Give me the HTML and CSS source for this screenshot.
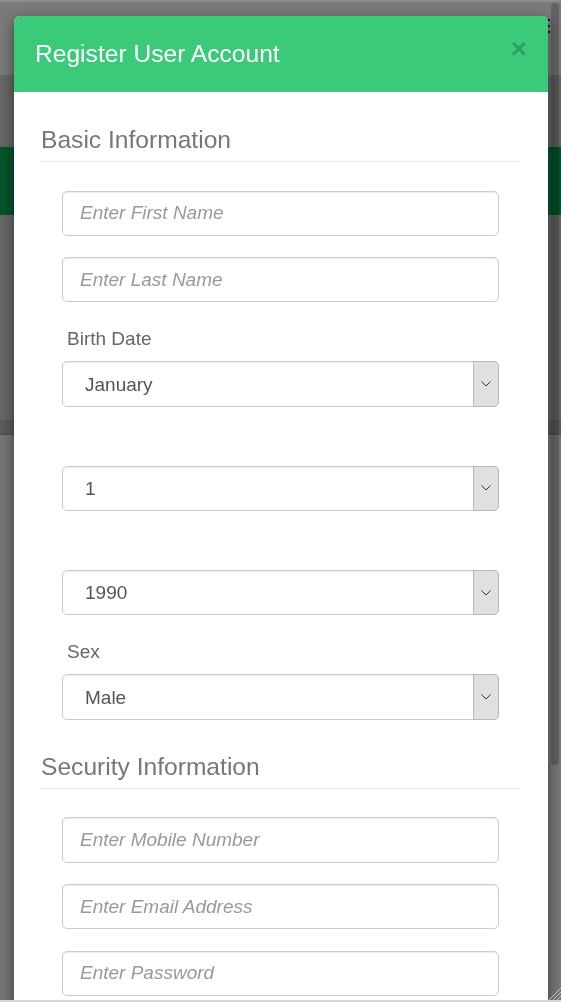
FILE: index.html
```html
<!DOCTYPE html>
<html lang="en">
<head>
<meta charset="utf-8">
<title>Register User Account</title>
<link rel="stylesheet" href="styles.css">
</head>
<body>
  <div class="site">
    <header class="navbar">
      <button class="navbar-toggle" type="button" aria-label="Menu">
        <span class="icon-bar"></span>
        <span class="icon-bar"></span>
        <span class="icon-bar"></span>
      </button>
    </header>
    <div class="subbar"></div>
    <section class="hero"></section>
    <section class="panel"></section>
    <div class="panel-foot"></div>
    <main class="content"></main>
  </div>

  <div class="backdrop"></div>

  <div class="modal">
    <div class="dialog">
      <div class="modal-header">
        <h4 class="modal-title">Register User Account</h4>
        <button class="close" type="button" aria-label="Close">&times;</button>
      </div>
      <div class="modal-body">
        <section class="section">
          <h3 class="section-title">Basic Information</h3>
          <div class="fields">
            <div class="group"><input class="form-control" type="text" placeholder="Enter First Name"></div>
            <div class="group"><input class="form-control" type="text" placeholder="Enter Last Name"></div>
            <div class="group">
              <label class="label">Birth Date</label>
              <div class="select">
                <select><option>January</option><option>February</option><option>March</option></select>
                <span class="select-arrow"><svg width="10" height="6" viewBox="0 0 10 6"><path d="M0.5 0.5 L5 5 L9.5 0.5" fill="none" stroke="#333" stroke-width="1"/></svg></span>
              </div>
            </div>
            <div class="group">
              <label class="label"></label>
              <div class="select">
                <select><option>1</option><option>2</option><option>3</option></select>
                <span class="select-arrow"><svg width="10" height="6" viewBox="0 0 10 6"><path d="M0.5 0.5 L5 5 L9.5 0.5" fill="none" stroke="#333" stroke-width="1"/></svg></span>
              </div>
            </div>
            <div class="group">
              <label class="label"></label>
              <div class="select">
                <select><option>1990</option><option>1991</option><option>1992</option></select>
                <span class="select-arrow"><svg width="10" height="6" viewBox="0 0 10 6"><path d="M0.5 0.5 L5 5 L9.5 0.5" fill="none" stroke="#333" stroke-width="1"/></svg></span>
              </div>
            </div>
            <div class="group">
              <label class="label">Sex</label>
              <div class="select">
                <select><option>Male</option><option>Female</option></select>
                <span class="select-arrow"><svg width="10" height="6" viewBox="0 0 10 6"><path d="M0.5 0.5 L5 5 L9.5 0.5" fill="none" stroke="#333" stroke-width="1"/></svg></span>
              </div>
            </div>
          </div>
        </section>
        <section class="section">
          <h3 class="section-title">Security Information</h3>
          <div class="fields">
            <div class="group"><input class="form-control" type="text" placeholder="Enter Mobile Number"></div>
            <div class="group"><input class="form-control" type="email" placeholder="Enter Email Address"></div>
            <div class="group"><input class="form-control" type="password" placeholder="Enter Password"></div>
          </div>
        </section>
      </div>
    </div>
  </div>

  <div class="scrollbar"><div class="scrollbar-thumb"></div></div>
  <div class="edge edge-top"></div>
  <div class="edge edge-bottom"></div>
  <svg class="grip" width="13" height="14" viewBox="0 0 13 14">
    <path d="M13 2 L1 14 M13 6 L5 14 M13 10 L9 14" stroke="#c4c4c4" stroke-width="1" fill="none"/>
  </svg>
</body>
</html>
```
FILE: styles.css
```css
* {
  box-sizing: border-box;
}

html,
body {
  margin: 0;
  height: 100%;
}

body {
  font-family: "Liberation Sans", Arial, sans-serif;
  background: #eeeeee;
  overflow: hidden;
}

/* underlying page */
.site {
  display: flex;
  flex-direction: column;
  min-height: 100%;
}

.navbar {
  height: 75px;
  background: #f5f5f5;
  display: flex;
  justify-content: flex-end;
  align-items: flex-start;
  padding: 19px 11px 0 0;
}

.navbar-toggle {
  display: flex;
  flex-direction: column;
  gap: 4px;
  padding: 0;
  border: 0;
  background: none;
}

.icon-bar {
  display: block;
  width: 22px;
  height: 2px;
  background: #1e2a3a;
}

.subbar {
  height: 72px;
  background: #cfcfcf;
}

.hero {
  height: 68px;
  background: #07ab56;
}

.panel {
  height: 205px;
  background: #d0d0d0;
}

.panel-foot {
  height: 15px;
  background: #b9b9b9;
  border-bottom: 2px solid #a8a8a8;
}

.content {
  flex: 1;
  background: #eeeeee;
}

.backdrop {
  position: fixed;
  inset: 0;
  background: rgba(0, 0, 0, 0.5);
}

/* modal */
.modal {
  position: fixed;
  inset: 0;
  overflow: hidden;
}

.dialog {
  margin: 16px 13px 30px 14px;
  background: #ffffff;
  border-radius: 6px;
  box-shadow: 0 5px 15px rgba(0, 0, 0, 0.5);
  overflow: hidden;
}

.modal-header {
  height: 76px;
  display: flex;
  justify-content: space-between;
  align-items: flex-start;
  padding: 24px 21px 0 21px;
  background: #3bc97a;
}

.modal-title {
  margin: 0;
  font-size: 24.6px;
  line-height: 28px;
  font-weight: normal;
  color: #ffffff;
}

.close {
  margin: -5px 0 0 0;
  padding: 0;
  border: 0;
  background: none;
  font-family: "Liberation Sans", Arial, sans-serif;
  font-size: 28px;
  font-weight: bold;
  line-height: 1;
  color: #000000;
  opacity: 0.2;
}

.modal-body {
  padding: 33px 28px 10px 26px;
}

.section + .section {
  margin-top: 10.67px;
}

.section-title {
  margin: 0;
  padding: 1.5px 0 8.5px 1px;
  font-size: 24.6px;
  line-height: 26px;
  font-weight: normal;
  color: #777777;
  border-bottom: 1px solid #e5e5e5;
}

.section + .section .section-title {
  padding-top: 2.5px;
  padding-bottom: 7.5px;
}

.fields {
  margin-top: 28.5px;
  padding: 0 21px 0 22px;
  display: flex;
  flex-direction: column;
}

.group {
  margin-bottom: 21.33px;
}

.label {
  display: block;
  height: 21px;
  margin: 4.17px 0 12.5px 5px;
  font-size: 19px;
  line-height: 21px;
  color: #666666;
}

.form-control {
  display: block;
  width: 100%;
  height: 45.33px;
  padding: 0 17px;
  border: 1px solid #cccccc;
  border-radius: 5px;
  background: #ffffff;
  box-shadow: inset 0 1px 1px rgba(0, 0, 0, 0.075);
  font-family: "Liberation Sans", Arial, sans-serif;
  font-size: 19px;
  color: #555555;
  outline: none;
}

.form-control::placeholder {
  color: #999999;
  font-style: italic;
}

.select {
  display: flex;
  height: 45.33px;
  border: 1px solid #cccccc;
  border-radius: 5px;
  background: #ffffff;
  box-shadow: inset 0 1px 1px rgba(0, 0, 0, 0.075);
}

.select select {
  flex: 1;
  min-width: 0;
  appearance: none;
  -webkit-appearance: none;
  border: 0;
  border-radius: 5px 0 0 5px;
  background: transparent;
  padding: 0 0 0 22px;
  font-family: "Liberation Sans", Arial, sans-serif;
  font-size: 19px;
  color: #555555;
  outline: none;
}

.select-arrow {
  width: 26px;
  margin: -1px -1px -1px 0;
  display: flex;
  align-items: center;
  justify-content: center;
  background: #e0e0e0;
  border: 1px solid #b9b9b9;
  border-radius: 0 5px 5px 0;
}

/* scrollbar of the modal */
.scrollbar {
  position: fixed;
  top: 0;
  right: 0;
  bottom: 0;
  width: 13px;
  padding: 3px 2px 0 3px;
}

.scrollbar-thumb {
  height: 762px;
  border-radius: 4px;
  background: rgba(0, 0, 0, 0.2);
}

/* window edges */
.edge {
  position: fixed;
  left: 0;
  right: 0;
  height: 2px;
}

.edge-top {
  top: 0;
  background: #8d8d8d;
}

.edge-bottom {
  bottom: 0;
  background: #d6d6d6;
}

.grip {
  position: fixed;
  right: 0;
  bottom: 2px;
}
```
